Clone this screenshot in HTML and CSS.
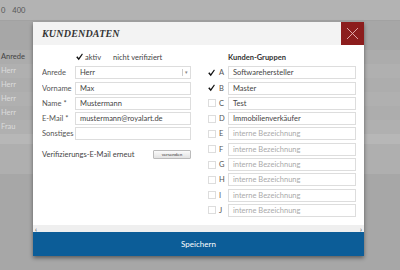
FILE: index.html
```html
<!DOCTYPE html>
<html lang="de">
<head>
    <meta charset="UTF-8">
    <title>Kundendaten</title>
    <link rel="stylesheet" href="styles.css">
</head>
<body>
    <!-- Seite im Hintergrund -->
    <div class="page">
        <div class="topbar"><span>0</span><span>400</span></div>
        <div class="table">
            <div class="th">Anrede</div>
            <div class="tr">Herr</div>
            <div class="tr odd">Herr</div>
            <div class="tr">Herr</div>
            <div class="tr odd">Herr</div>
            <div class="tr">Frau</div>
            <div class="tr light"></div>
            <div class="tr tall"></div>
        </div>
    </div>

    <!-- Dialog -->
    <div class="modal">
        <div class="modal-head">
            <h2 class="modal-title">KUNDENDATEN</h2>
            <div class="close">
                <svg width="13" height="13" viewBox="0 0 13 13"><path d="M1 1 L12 12 M12 1 L1 12" stroke="#e9b3b3" stroke-width="0.9" fill="none"/></svg>
            </div>
        </div>
        <div class="modal-body">
            <div class="col-left">
                <div class="check-row">
                    <svg class="tick" width="7" height="8" viewBox="0 0 10 11"><path d="M0.3 6 L2 4.6 L3.9 7 L8.6 0.4 L9.8 1.4 L4 10.3 Z" fill="#111"/></svg>
                    <span class="aktiv">aktiv</span>
                    <span class="status">nicht verifiziert</span>
                </div>
                <div class="field">
                    <span class="label">Anrede</span>
                    <div class="input select">Herr<span class="arrow">▾</span></div>
                </div>
                <div class="field">
                    <span class="label">Vorname</span>
                    <div class="input">Max</div>
                </div>
                <div class="field">
                    <span class="label">Name *</span>
                    <div class="input">Mustermann</div>
                </div>
                <div class="field">
                    <span class="label">E-Mail *</span>
                    <div class="input">mustermann@royalart.de</div>
                </div>
                <div class="field">
                    <span class="label">Sonstiges</span>
                    <div class="input"></div>
                </div>
                <div class="verify">
                    <span>Verifizierungs-E-Mail erneut</span>
                    <button class="small-btn">versenden</button>
                </div>
            </div>
            <div class="col-right">
                <div class="group-head">Kunden-Gruppen</div>
                <div class="group">
                    <svg class="tick box-tick" width="7" height="8" viewBox="0 0 10 11"><path d="M0.3 6 L2 4.6 L3.9 7 L8.6 0.4 L9.8 1.4 L4 10.3 Z" fill="#111"/></svg>
                    <span class="letter">A</span><div class="input">Softwarehersteller</div>
                </div>
                <div class="group">
                    <svg class="tick box-tick" width="7" height="8" viewBox="0 0 10 11"><path d="M0.3 6 L2 4.6 L3.9 7 L8.6 0.4 L9.8 1.4 L4 10.3 Z" fill="#111"/></svg>
                    <span class="letter">B</span><div class="input">Master</div>
                </div>
                <div class="group"><span class="box"></span><span class="letter">C</span><div class="input">Test</div></div>
                <div class="group"><span class="box"></span><span class="letter">D</span><div class="input">Immobilienverkäufer</div></div>
                <div class="group"><span class="box"></span><span class="letter">E</span><div class="input empty">interne Bezeichnung</div></div>
                <div class="group"><span class="box"></span><span class="letter">F</span><div class="input empty">interne Bezeichnung</div></div>
                <div class="group"><span class="box"></span><span class="letter">G</span><div class="input empty">interne Bezeichnung</div></div>
                <div class="group"><span class="box"></span><span class="letter">H</span><div class="input empty">interne Bezeichnung</div></div>
                <div class="group"><span class="box"></span><span class="letter">I</span><div class="input empty">interne Bezeichnung</div></div>
                <div class="group"><span class="box"></span><span class="letter">J</span><div class="input empty">interne Bezeichnung</div></div>
            </div>
        </div>
        <div class="scroll"><span>‹</span><span>›</span></div>
        <div class="footer">Speichern</div>
    </div>
</body>
</html>
```

FILE: styles.css
```css
body {
    margin: 0;
    width: 400px;
    height: 270px;
    overflow: hidden;
    position: relative;
    font-family: Lato, "Open Sans", sans-serif;
    font-size: 7.5px;
    background: #a7a7a7;
}
.topbar {
    height: 20px;
    background: #b3b3b3;
    border-bottom: 1px solid #a2a2a2;
    display: flex;
    align-items: center;
    gap: 7px;
    color: #555;
    padding-left: 1px;
}
.table {
    margin-top: 29px;
}
.th {
    height: 14px;
    line-height: 14px;
    color: #444;
    background: #acacac;
    padding-left: 1px;
}
.tr {
    height: 14px;
    line-height: 14px;
    color: #dcdcdc;
    background: #b0b0b0;
    padding-left: 1px;
}
.tr.odd {
    background: #adadad;
}
.tr.light {
    height: 10px;
    background: #b7b7b7;
}
.tr.tall {
    height: 30px;
    background: #afafaf;
}
.modal {
    position: absolute;
    left: 33px;
    top: 22px;
    width: 331px;
    background: #fff;
    box-shadow: 0 2px 4px rgba(0,0,0,0.45);
}
.modal-head {
    height: 23px;
    background: #f3f3f3;
    display: flex;
    align-items: center;
    justify-content: space-between;
}
.modal-title {
    margin: 0 0 0 9px;
    font-family: "Liberation Serif", serif;
    font-style: italic;
    font-weight: bold;
    font-size: 10px;
    letter-spacing: 0.2px;
    color: #333;
}
.close {
    width: 23px;
    height: 23px;
    background: #8c1d1d;
    display: flex;
    align-items: center;
    justify-content: center;
}
.modal-body {
    display: flex;
    height: 180px;
    box-sizing: border-box;
    padding: 5px 8px 0 9px;
}
.col-left {
    width: 149px;
}
.col-right {
    width: 148px;
    margin-left: 17px;
}
.check-row {
    height: 14px;
    display: flex;
    align-items: center;
    padding-left: 34px;
    color: #444;
}
.aktiv {
    margin-left: 2px;
}
.status {
    margin-left: 12px;
}
.field, .group {
    display: flex;
    align-items: center;
    height: 13px;
    margin-top: 2.3px;
}
.label {
    width: 33px;
    flex: none;
    color: #555;
    white-space: nowrap;
    overflow: hidden;
}
.input {
    flex: 1;
    height: 13px;
    box-sizing: border-box;
    border: 1px solid #ddd;
    padding-left: 4px;
    display: flex;
    align-items: center;
    color: #444;
    white-space: nowrap;
}
.input.empty {
    color: #aaa;
}
.select {
    justify-content: space-between;
    padding-right: 2px;
}
.arrow {
    border-left: 1px solid #ccc;
    height: 7px;
    line-height: 7px;
    padding-left: 2px;
    font-size: 5px;
    color: #888;
}
.verify {
    margin-top: 10px;
    height: 9px;
    display: flex;
    align-items: center;
    justify-content: space-between;
    color: #444;
}
.small-btn {
    width: 38px;
    height: 9px;
    padding: 0;
    border: 1px solid #bbb;
    border-radius: 1px;
    background: linear-gradient(#fbfbfb, #e2e2e2);
    font-family: Lato, sans-serif;
    font-size: 4.5px;
    color: #333;
}
.group-head {
    height: 14px;
    display: flex;
    align-items: center;
    padding-left: 20px;
    font-weight: bold;
    color: #333;
}
.box {
    width: 8px;
    height: 8px;
    box-sizing: border-box;
    border: 1px solid #ddd;
    flex: none;
}
.box-tick {
    flex: none;
    margin-right: 1px;
}
.letter {
    width: 9px;
    padding-left: 3px;
    flex: none;
    color: #555;
}
.scroll {
    height: 7px;
    background: #efefef;
    display: flex;
    align-items: center;
    justify-content: space-between;
    padding: 0 2px;
    font-size: 7px;
    color: #333;
}
.footer {
    height: 24px;
    background: #0c5d98;
    color: #fff;
    display: flex;
    align-items: center;
    justify-content: center;
    font-size: 8px;
}
```
